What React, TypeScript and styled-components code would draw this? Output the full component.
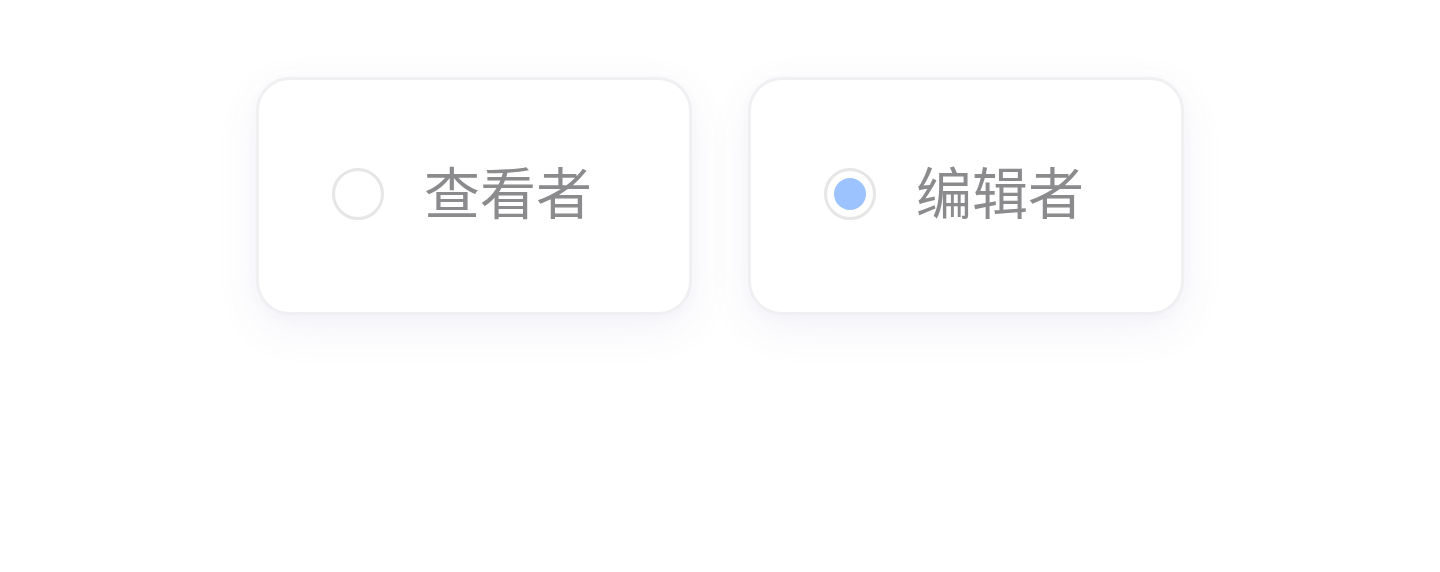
import React, { useState } from "react";
import styled, { createGlobalStyle } from "styled-components";

const Global = createGlobalStyle`
  html, body { margin: 0; padding: 0; background: #ffffff; }
  body { font-family: "Noto Sans CJK SC", "Noto Sans", sans-serif; }
`;

const Page = styled.div`
  width: 1440px;
  height: 572px;
  display: flex;
  justify-content: center;
  align-items: flex-start;
  padding-top: 77px;
  box-sizing: border-box;
`;

const Group = styled.div`
  display: flex;
  gap: 56px;
`;

const Card = styled.label`
  width: 436px;
  height: 238px;
  box-sizing: border-box;
  border: 3px solid #f0f0f2;
  border-radius: 34px;
  background: #ffffff;
  box-shadow: 0 14px 44px rgba(90, 100, 170, 0.075), 0 2px 12px rgba(90, 100, 170, 0.03);
  display: flex;
  align-items: center;
  padding-left: 73px;
  gap: 40px;
  cursor: pointer;
`;

const Radio = styled.span<{ $checked: boolean }>`
  width: 52px;
  height: 52px;
  box-sizing: border-box;
  border-radius: 50%;
  border: 3px solid #e6e6e6;
  display: flex;
  align-items: center;
  justify-content: center;
  flex: none;
  margin-top: -4px;
  &::after {
    content: "";
    width: 32px;
    height: 32px;
    border-radius: 50%;
    background: #9dc3ff;
    display: ${(p) => (p.$checked ? "block" : "none")};
  }
`;

const Label = styled.span`
  font-family: "Noto Sans CJK SC", "Noto Sans", sans-serif;
  font-size: 56px;
  line-height: 1;
  color: #8b8b8e;
  margin-top: -12px;
`;

const options = ["查看者", "编辑者"];

export default function App() {
  const [selected, setSelected] = useState(1);
  return (
    <>
      <Global />
      <Page>
        <Group>
          {options.map((o, i) => (
            <Card key={o} onClick={() => setSelected(i)}>
              <Radio $checked={selected === i} />
              <Label>{o}</Label>
            </Card>
          ))}
        </Group>
      </Page>
    </>
  );
}
